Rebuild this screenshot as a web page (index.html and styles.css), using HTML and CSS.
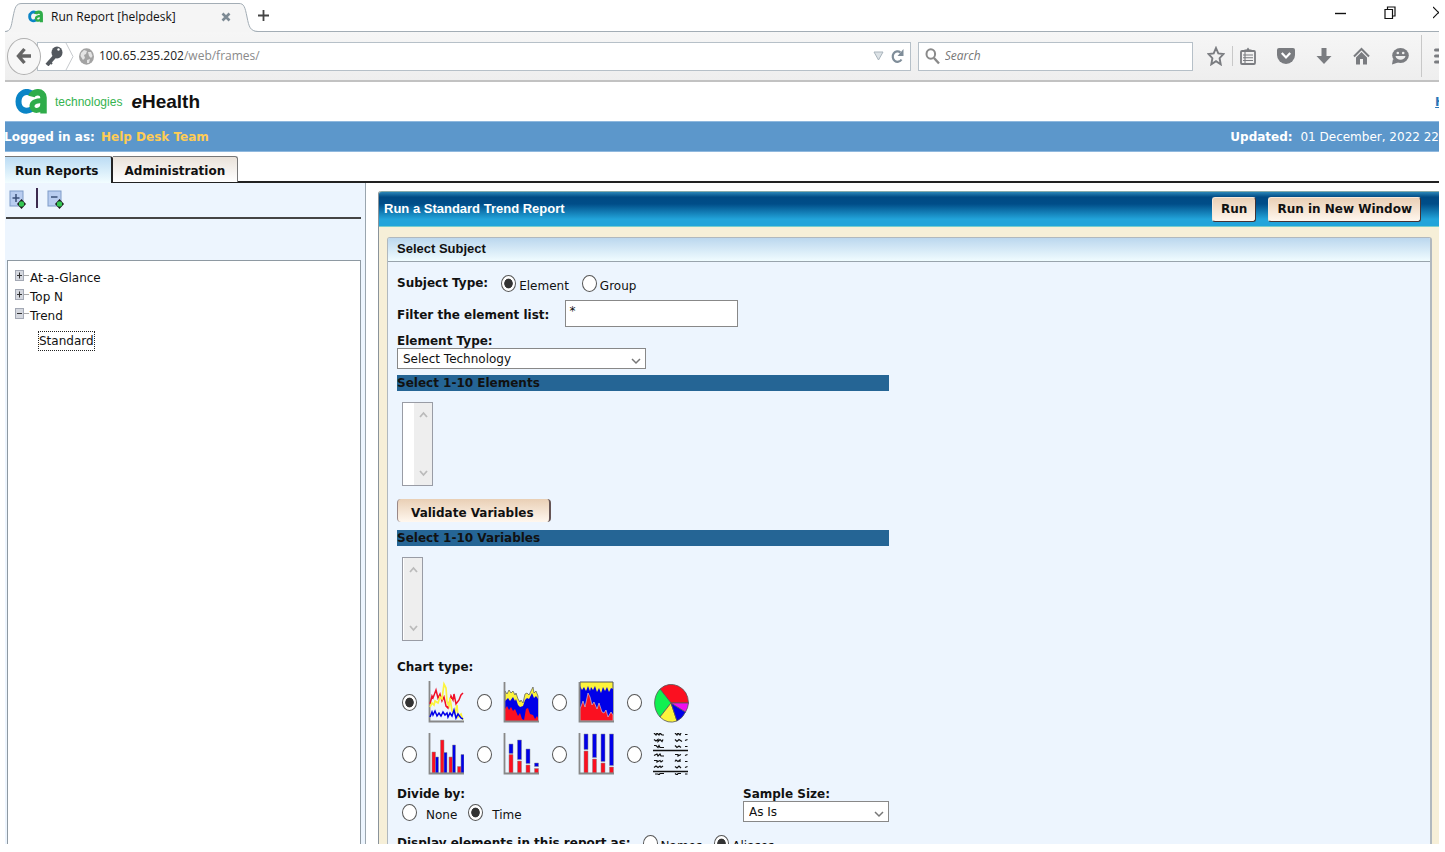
FILE: index.html
```
<!DOCTYPE html>
<html lang="en">
<head>
<meta charset="utf-8">
<title>Run Report [helpdesk]</title>
<link rel="stylesheet" href="styles.css">
</head>
<body>
<svg class="defs" aria-hidden="true">
  <symbol id="ca-mark" viewBox="0 0 34 25">
    <path d="M17 4.500C10 .5 3.500 5 3.500 12.500C3.500 20.500 10 24 17 20" fill="none" stroke="#0a84c6" stroke-width="6"/>
    <path d="M16.500 7.500C18 1.800 28.500 1.500 28.500 8.500V24.500" fill="none" stroke="#2fac4a" stroke-width="6.500"/>
    <path d="M28.500 11.500C20 11.500 17 13.500 17 17C17 23.500 27 22.500 28 16" fill="none" stroke="#2fac4a" stroke-width="5"/>
  </symbol>
</svg>
<div class="frame">
  <div class="tabstrip">
    <div class="browser-tab">
      <svg class="tab-edge" width="17" height="31" viewBox="0 0 17 31"><path d="M0 31C6 30 6 26 8 16C10 6 11 2.500 17 2.500V31Z" fill="#f5f5f5"/><path d="M0 30.500C6 30 6 26 8 16C10 6 11 2.500 17 2.500" fill="none" stroke="#a3adb5"/></svg>
      <div class="tab-body">
        <svg class="favicon" width="16" height="13" preserveAspectRatio="none"><use href="#ca-mark"/></svg>
        <span class="tab-title">Run Report [helpdesk]</span>
        <button class="bare tab-close" aria-label="Close tab"><svg width="10" height="10" viewBox="0 0 10 10"><path d="M1.500 1.500L8.500 8.500M8.500 1.500L1.500 8.500" stroke="#7d8a94" stroke-width="2.600"/></svg></button>
      </div>
      <svg class="tab-edge" width="19" height="31" viewBox="0 0 19 31"><path d="M19 31C11 30 10 26 8 16C6 6 5 2.500 0 2.500V31Z" fill="#f5f5f5"/><path d="M19 30.500C11 30 10 26 8 16C6 6 5 2.500 0 2.500" fill="none" stroke="#a3adb5"/></svg>
    </div>
    <button class="bare new-tab" aria-label="New tab"><svg width="11" height="11" viewBox="0 0 11 11"><path d="M5.500 0V11M0 5.500H11" stroke="#444" stroke-width="1.800"/></svg></button>
    <div class="window-buttons">
      <button class="bare" aria-label="Minimize"><svg width="12" height="13" viewBox="0 0 12 13"><path d="M0 7.500H11" stroke="#111" stroke-width="1.400"/></svg></button>
      <button class="bare" aria-label="Restore"><svg width="12" height="13" viewBox="0 0 12 13"><path d="M1 3.500H8.500V12.500H1ZM3.500 3.500V1H11V10H8.500" fill="none" stroke="#111" stroke-width="1.200"/></svg></button>
      <button class="bare" aria-label="Close window"><svg width="12" height="13" viewBox="0 0 12 13"><path d="M0 1L11 12M11 1L0 12" stroke="#111" stroke-width="1.200"/></svg></button>
    </div>
  </div>

  <div class="navbar">
    <button class="back" aria-label="Back"><svg width="16" height="18" viewBox="0 0 16 18"><path d="M8.500 2L2.500 9L8.500 16M3 9H15" fill="none" stroke="#666" stroke-width="3.400"/></svg></button>
    <div class="urlbar">
      <svg class="key" width="18" height="20" viewBox="0 0 18 20"><path d="M10 10L2 19" stroke="#53585e" stroke-width="4"/><path d="M4 15L7 18" stroke="#53585e" stroke-width="2"/><ellipse cx="12" cy="6.500" rx="5.500" ry="6" fill="#53585e"/><circle cx="13.500" cy="3.500" r="1.200" fill="#fff"/></svg>
      <svg width="9" height="27" viewBox="0 0 9 27"><path d="M1 0L8 13.500L1 27" fill="none" stroke="#c6cacd"/></svg>
      <svg class="globe" width="15" height="17" viewBox="0 0 15 17"><ellipse cx="7.500" cy="8.500" rx="7.500" ry="8.300" fill="#a3a3a3"/><path d="M2 5L5 2L8 3L7 6L5 7L6 10L4 12L1.500 8ZM9 4L12 4L13.500 8L12 10L10 8ZM8 12L11 11L10 15L8 15Z" fill="#e4e4e4"/></svg>
      <input class="url" type="text" aria-label="Address" value="100.65.235.202/web/frames/">
      <div class="url-text" aria-hidden="true"><span class="host">100.65.235.202</span>/web/frames/</div>
      <button class="bare" aria-label="History"><svg width="11" height="10" viewBox="0 0 11 10"><path d="M1 1H10L5.500 9Z" fill="#dce2e6" stroke="#a9b4bc"/></svg></button>
      <button class="bare reload" aria-label="Reload"><svg width="13" height="15" viewBox="0 0 13 15"><path d="M10.500 10.500A4.800 5.200 0 1 1 9.500 3.500" fill="none" stroke="#7f8d99" stroke-width="2.200"/><path d="M12.500 0V7H6.500Z" fill="#7f8d99"/></svg></button>
    </div>
    <div class="searchbar">
      <svg width="15" height="17" viewBox="0 0 15 17"><ellipse cx="5.800" cy="6" rx="4.300" ry="4.800" fill="none" stroke="#8a8a8a" stroke-width="2"/><path d="M9 10L14 15.500" stroke="#8a8a8a" stroke-width="2.400"/></svg>
      <input type="text" aria-label="Search" placeholder="Search">
    </div>
    <div class="nav-icons">
      <button class="bare" aria-label="Bookmark"><svg width="18" height="20" viewBox="0 0 18 20"><path d="M9 2L11.300 7.400L16.500 8L12.600 12.200L13.700 18.300L9 15.200L4.300 18.300L5.400 12.200L1.500 8L6.700 7.400Z" fill="none" stroke="#7a7c80" stroke-width="1.900"/></svg></button>
      <span class="rule"></span>
      <button class="bare" aria-label="Bookmarks list"><svg width="16" height="18" viewBox="0 0 16 18"><rect x="1" y="4" width="14" height="13" rx="1" fill="none" stroke="#7a7c80" stroke-width="1.800"/><path d="M4.500 4.500V2.500H6.500L8 .500L9.500 2.500H11.500V4.500Z" fill="#7a7c80"/><path d="M5 5V16M3 8H13M3 10.700H13M3 13.500H13" stroke="#7a7c80" stroke-width="1.100"/></svg></button>
      <button class="bare" aria-label="Pocket"><svg width="18" height="18" viewBox="0 0 18 18"><path d="M2 1H16Q18 1 18 3V8A9 9 0 0 1 0 8V3Q0 1 2 1Z" fill="#7a7c80"/><path d="M4.800 6L9 10.500L13.200 6" fill="none" stroke="#fff" stroke-width="2.200"/></svg></button>
      <button class="bare" aria-label="Downloads"><svg width="16" height="18" viewBox="0 0 16 18"><path d="M5.500 1H10.500V9H15.500L8 17L.500 9H5.500Z" fill="#7a7c80"/></svg></button>
      <button class="bare" aria-label="Home"><svg width="17" height="18" viewBox="0 0 17 18"><path d="M1 9.500L8.500 2L16 9.500" fill="none" stroke="#7a7c80" stroke-width="2"/><path d="M3 10.500L8.500 5L14 10.500V17.500H10V12H7V17.500H3Z" fill="#7a7c80"/></svg></button>
      <button class="bare" aria-label="Hello"><svg width="18" height="18" viewBox="0 0 18 18"><ellipse cx="9.500" cy="8.500" rx="8.300" ry="7.500" fill="#7a7c80"/><path d="M2 12L1 17.500L7 15.500Z" fill="#7a7c80"/><circle cx="6.800" cy="6" r="1.300" fill="#eee"/><circle cx="12.200" cy="6" r="1.300" fill="#eee"/><path d="M4.500 9H14.500C13.500 14 5.500 14 4.500 9Z" fill="#eee"/></svg></button>
      <span class="rule tall"></span>
      <button class="bare" aria-label="Menu"><svg width="18" height="16" viewBox="0 0 18 16"><path d="M1.500 2H17M1.500 8H17M1.500 14H17" stroke="#7a7c80" stroke-width="3" stroke-linecap="round"/></svg></button>
    </div>
  </div>

  <header class="brand">
    <svg width="34" height="25" role="img" aria-label="ca"><use href="#ca-mark"/></svg>
    <span class="tech">technologies</span>
    <h1 class="product"><em>e</em>Health</h1>
    <a class="help" href="#">Help</a>
  </header>

  <div class="status">
    <div class="logged">Logged in as: <span class="user">Help Desk Team</span></div>
    <div class="updated"><b>Updated:</b> 01 December, 2022 22</div>
  </div>

  <nav class="app-tabs">
    <a class="app-tab current" href="#">Run Reports</a>
    <a class="app-tab" href="#">Administration</a>
  </nav>

  <div class="workspace">
    <aside class="side">
      <div class="tree-tools">
        <button class="bare" aria-label="Expand all"><svg width="18" height="20" viewBox="0 0 18 20"><rect x="1" y="1" width="13" height="15" fill="#b9cdf0" stroke="#7f9bc8"/><path d="M7 4V12M3.500 8H10.500" stroke="#3b4f77" stroke-width="1.500"/><path d="M12.500 9L17 14L12.500 19L8 14Z" fill="#181818"/><circle cx="12.500" cy="14" r="2.700" fill="#35c653"/></svg></button>
        <span class="divider"></span>
        <button class="bare" aria-label="Collapse all"><svg width="18" height="20" viewBox="0 0 18 20"><rect x="1" y="1" width="13" height="15" fill="#b9cdf0" stroke="#7f9bc8"/><path d="M4 7H10.500" stroke="#3b4f77" stroke-width="1.500"/><path d="M12.500 9L17 14L12.500 19L8 14Z" fill="#181818"/><circle cx="12.500" cy="14" r="2.700" fill="#35c653"/></svg></button>
      </div>
      <ul class="tree">
        <li><svg width="14" height="12" viewBox="0 0 14 12"><rect x=".5" y=".5" width="8" height="10" fill="#d5d8df" stroke="#a3a8b4"/><path d="M4.500 2.500V8.500M2 5.500H7" stroke="#333"/><path d="M9 5.500H14" stroke="#aaa"/></svg><a href="#">At-a-Glance</a></li>
        <li><svg width="14" height="12" viewBox="0 0 14 12"><rect x=".5" y=".5" width="8" height="10" fill="#d5d8df" stroke="#a3a8b4"/><path d="M4.500 2.500V8.500M2 5.500H7" stroke="#333"/><path d="M9 5.500H14" stroke="#aaa"/></svg><a href="#">Top N</a></li>
        <li><svg width="14" height="12" viewBox="0 0 14 12"><rect x=".5" y=".5" width="8" height="10" fill="#d5d8df" stroke="#a3a8b4"/><path d="M2 5.500H7" stroke="#333"/><path d="M9 5.500H14" stroke="#aaa"/></svg><a href="#">Trend</a></li>
        <li class="leaf"><a class="focused" href="#">Standard</a></li>
      </ul>
    </aside>

    <main class="report">
      <div class="report-title">
        <h2>Run a Standard Trend Report</h2>
        <button class="action">Run</button>
        <button class="action">Run in New Window</button>
      </div>
      <form class="subject">
        <h3>Select Subject</h3>
        <div class="fields">
          <div class="line type-line">
            <b>Subject Type:</b>
            <label><input type="radio" name="subject" checked><span>Element</span></label>
            <label><input type="radio" name="subject"><span>Group</span></label>
          </div>
          <div class="line filter-line">
            <label class="caption" for="filter">Filter the element list:</label>
            <input id="filter" class="filter" type="text" value="*">
          </div>
          <label class="caption" for="etype">Element Type:</label>
          <select id="etype" class="drop wide"><option>Select Technology</option></select>
          <label class="band" for="elements">Select 1-10 Elements</label>
          <div class="listbox">
            <select id="elements" multiple></select>
            <div class="scroll">
              <svg width="9" height="7" viewBox="0 0 9 7"><path d="M1 6L4.500 2L8 6" fill="none" stroke="#bbb" stroke-width="1.800"/></svg>
              <svg width="9" height="7" viewBox="0 0 9 7"><path d="M1 1L4.500 5L8 1" fill="none" stroke="#bbb" stroke-width="1.800"/></svg>
            </div>
          </div>
          <button type="button" class="action validate">Validate Variables</button>
          <label class="band" for="variables">Select 1-10 Variables</label>
          <div class="listbox slim">
            <select id="variables" multiple></select>
            <div class="scroll">
              <svg width="9" height="7" viewBox="0 0 9 7"><path d="M1 6L4.500 2L8 6" fill="none" stroke="#bbb" stroke-width="1.800"/></svg>
              <svg width="9" height="7" viewBox="0 0 9 7"><path d="M1 1L4.500 5L8 1" fill="none" stroke="#bbb" stroke-width="1.800"/></svg>
            </div>
          </div>
          <b class="caption">Chart type:</b>
          <div class="charts">
            <label><input type="radio" name="chart" aria-label="Line" checked><svg width="36" height="42" viewBox="0 0 36 42"><path d="M1.500 0V40.500H36" fill="none" stroke="#888" stroke-width="1.800"/><path d="M2 23L4 15L5 17L8 9L10 17L12 13L14 20L16 16L18 25L20 27L23 15L25 19L26 13L28 23L31 19L33 14L35 12" fill="none" stroke="#f01028" stroke-width="1.500"/><path d="M2 26L4 22L6 24L7 20L10 22L12 16L14 18L16 3L18 7L19 21L21 25L22 17L24 30L27 32L29 24L30 36L33 33L35 39" fill="none" stroke="#fcf33c" stroke-width="1.700"/><path d="M2 36L4 31L5 34L7 30L9 35L11 32L13 35L15 31L17 34L19 32L20 36L22 32L24 35L26 29L28 37L30 33L33 37L35 38" fill="none" stroke="#0000e8" stroke-width="1.500"/></svg></label>
            <label><input type="radio" name="chart" aria-label="Stacked area"><svg width="36" height="42" viewBox="0 0 36 42"><path d="M2 10L4 13L6 9L8 12L10 10L12 14L13 12L15 18L17 21L18 19L20 22L22 13L24 12L26 14L28 10L30 6L31 12L33 10L35 15V40H2Z" fill="#fcf33c" stroke="#555" stroke-width=".7"/><path d="M2 20L5 17L7 20L10 16L12 20L13 18L15 24L17 26L20 25L22 19L24 17L26 18L29 12L31 17L33 15L35 18V40H2Z" fill="#0000e8"/><path d="M2 28L4 25L6 29L8 26L10 30L12 28L15 35L17 32L19 38L21 39L23 28L25 27L27 33L30 34L32 38L34 35L35 37V40H2Z" fill="#fb1020"/><path d="M1.500 1V40.500H36" fill="none" stroke="#888" stroke-width="1.800"/></svg></label>
            <label><input type="radio" name="chart" aria-label="Percent area"><svg width="36" height="42" viewBox="0 0 36 42"><path d="M2 1H35V40H2Z" fill="#fcf33c" stroke="#555"/><path d="M2 5L4 9L6 6L8 10L10 5L12 10L13 6L15 9L17 5L19 11L21 7L23 12L25 6L27 10L29 6L31 11L33 7L35 8V40H2Z" fill="#0000e8"/><path d="M2 28L5 20L7 26L10 12L12 16L14 24L16 21L19 28L21 22L24 31L26 32L28 29L30 36L33 31L35 34V40H2Z" fill="#fb1020" stroke="#ddd" stroke-width=".6"/><path d="M1.500 1V40.500H36" fill="none" stroke="#888" stroke-width="1.800"/></svg></label>
            <label><input type="radio" name="chart" aria-label="Pie"><svg width="36" height="42" viewBox="0 0 36 42"><g stroke="#555" stroke-width=".8"><path d="M18 22L7 8A17.300 19.300 0 0 1 35.500 22Z" fill="#fb1020"/><path d="M18 22L7 36A17.300 19.300 0 0 1 7 8Z" fill="#10f050"/><path d="M18 22L24 40A17.300 19.300 0 0 1 7 36Z" fill="#fcf33c"/><path d="M18 22L32.500 31A17.300 19.300 0 0 1 24 40Z" fill="#0000e8"/><path d="M18 22H35.500A17.300 19.300 0 0 1 32.500 31Z" fill="#f010f0"/></g></svg></label>
            <label><input type="radio" name="chart" aria-label="Grouped bar"><svg width="36" height="42" viewBox="0 0 36 42"><g stroke="#888" stroke-width=".5"><path d="M4 19H7.500V40H4ZM12.500 7H16V40H12.500ZM21 24H24.500V40H21ZM29.500 33.500H33V40H29.500Z" fill="#fb1020"/><path d="M7.500 24H10.500V40H7.500ZM16 19.500H19V40H16ZM24.500 12H27.500V40H24.500ZM33 21.500H36V40H33Z" fill="#0000e8"/></g><path d="M1.500 0V40.500H36" fill="none" stroke="#888" stroke-width="1.800"/></svg></label>
            <label><input type="radio" name="chart" aria-label="Stacked bar"><svg width="36" height="42" viewBox="0 0 36 42"><g stroke="#888" stroke-width=".5"><path d="M6 11H10V20.500H6ZM14.500 7H18.500V26.500H14.500ZM23 16H27V30.500H23ZM31.500 30H35.500V33.500H31.500Z" fill="#0000e8"/><path d="M6 21.500H10V40H6ZM14.500 28H18.500V40H14.500ZM23 32H27V40H23ZM31.500 35.500H35.500V40H31.500Z" fill="#fb1020"/></g><path d="M1.500 0V40.500H36" fill="none" stroke="#888" stroke-width="1.800"/></svg></label>
            <label><input type="radio" name="chart" aria-label="Percent bar"><svg width="36" height="42" viewBox="0 0 36 42"><g stroke="#888" stroke-width=".5"><path d="M6 1H10V16.500H6ZM14.500 1H18.500V24.500H14.500ZM23 1H27V28.500H23ZM31.500 1H35.500V32.500H31.500Z" fill="#0000e8"/><path d="M6 18H10V40H6ZM14.500 26H18.500V40H14.500ZM23 30H27V40H23ZM31.500 34H35.500V40H31.500Z" fill="#fb1020"/></g><path d="M1.500 0V40.500H36" fill="none" stroke="#888" stroke-width="1.800"/></svg></label>
            <label><input type="radio" name="chart" aria-label="Table"><svg width="36" height="42" viewBox="0 0 36 42"><path d="M0 17.500H35M0 38.500H35" stroke="#111" stroke-width="1.300"/><path d="M1 0L3 2L4 0L6 2L7 0L9 2H11M1 6.500L3 8L5 6.500V8.500L7 6.500L9 8.500L10 6.500M1 12.500H3L5 14.500L6 12.500L7 14.500H11M1 22.500L4 21L5 23L7 21L8 23H11M1 27.500H4V29L7 27.500L8 29L10 27.500M1 34.500L3 33L5 34.500L7 33L8 34.500L10 33M2 41H5L6 42L7 40.500H11M22 0L24 2L25 0L27 2L28 0M22 6.500L24 8.500L26 6.500L29 8.500M22 12.500L24 14.500L26 13L28 14.500M22 21.500H25V23L28 21.500M22 28.500L23 27L25 28.500L27 27V29M22 33.500L24 35L26 33L28 35M22 40.500L24 42L25 40.500H28M32 1.500H34.500M32 7.500L34.500 6.500M32 13.500H34.500M32 22.500L34.500 21.500M32 28.500H34.500M32 34.500L34.500 33.500M32 41H34.500" fill="none" stroke="#111" stroke-width="1.200"/></svg></label>
          </div>
          <div class="split">
            <div>
              <b class="caption">Divide by:</b>
              <div class="line divide-line">
                <label><input type="radio" name="divide"><span>None</span></label>
                <label><input type="radio" name="divide" checked><span>Time</span></label>
              </div>
            </div>
            <div class="sample">
              <label class="caption" for="sample">Sample Size:</label>
              <select id="sample" class="drop"><option>As Is</option></select>
            </div>
          </div>
          <div class="line display-line">
            <b>Display elements in this report as:</b>
            <label><input type="radio" name="display"><span>Names</span></label>
            <label><input type="radio" name="display" checked><span>Aliases</span></label>
          </div>
        </div>
      </form>
    </main>
  </div>
</div>
</body>
</html>
```
FILE: styles.css
```
* { box-sizing: border-box; }
body {
  margin: 0;
  padding: 0 6px 8px 5px;
  height: 100vh;
  overflow: hidden;
  background: #fff;
  color: #111;
  font: 12px/16px "DejaVu Sans", Verdana, sans-serif;
}
svg { display: block; flex: none; }
.defs { position: absolute; width: 0; height: 0; }
button, input, select { font: inherit; color: inherit; margin: 0; }
.bare { border: 0; padding: 0; background: none; }
a { color: inherit; text-decoration: none; }
h1, h2, h3 { margin: 0; }
.frame { height: 100%; display: flex; flex-direction: column; overflow: hidden; }
.frame > * { flex: none; }

/* browser chrome */
.tabstrip {
  height: 32px;
  display: flex;
  align-items: flex-end;
  border-bottom: 1px solid #a3adb5;
  font: 12px/16px "Open Sans", sans-serif;
}
.browser-tab { display: flex; margin-bottom: -1px; height: 31px; }
.tab-body {
  width: 217px;
  display: flex;
  align-items: center;
  gap: 7px;
  padding: 0 8px 3px 6px;
  border-top: 1px solid #a3adb5;
  margin-top: 2px;
  background: #f5f5f5;
}
.tab-close { margin-left: auto; }
.new-tab { padding: 0 0 10px 0; }
.window-buttons {
  margin: 0 -6px 12px auto;
  display: flex;
  gap: 37px;
}
.navbar {
  height: 50px;
  display: flex;
  align-items: center;
  border-bottom: 2px solid #c2c2c2;
  padding-left: 2px;
  background: linear-gradient(#f6f6f6, #eee);
  font: 12px/16px "Open Sans", sans-serif;
  color: #8a8a8a;
}
.back {
  width: 34px;
  height: 37px;
  z-index: 1;
  display: flex;
  align-items: center;
  justify-content: center;
  padding: 0;
  border: 1px solid #b0b0b0;
  border-radius: 50%;
  background: #f7f7f7;
}
.urlbar {
  position: relative;
  flex: 874 1 0;
  height: 29px;
  margin-left: -4px;
  padding: 0 6px 0 7px;
  display: flex;
  align-items: center;
  border: 1px solid #b6c0c8;
  background: #fff;
}
.key { margin-right: 2px; }
.globe { margin: 0 6px 0 5px; }
.url { flex: 1; min-width: 0; border: 0; padding: 0; outline: 0; background: none; color: transparent; }
.url-text { position: absolute; left: 61px; pointer-events: none; }
.host { color: #222; }
.reload { margin-left: 7px; }
.searchbar {
  flex: 272 1 0;
  height: 29px;
  margin-left: 7px;
  padding-left: 6px;
  display: flex;
  align-items: center;
  gap: 5px;
  border: 1px solid #b6c0c8;
  background: #fff;
}
.searchbar input { flex: 1; min-width: 0; border: 0; padding: 0; background: none; }
.searchbar input::placeholder { color: #777; font-style: italic; opacity: 1; }
.nav-icons { display: flex; align-items: center; gap: 21px; margin: 0 -13px 0 14px; }
.rule { width: 1px; height: 20px; margin: 0 -14px; background: #c8c8c8; }
.rule.tall { height: 42px; margin: 0 -9px; }

/* application header */
.brand { height: 39px; display: flex; align-items: center; padding-left: 10px; }
.tech { margin-left: 6px; font: 12px/16px "Liberation Sans", Arial, sans-serif; color: #35b34f; }
.product { margin-left: 9px; font: bold 19px/24px "Liberation Sans", Arial, sans-serif; }
.help { margin: 0 -27px 0 auto; color: #2a76b8; font-weight: bold; text-decoration: underline; }
.status {
  height: 31px;
  display: flex;
  align-items: center;
  justify-content: space-between;
  border: solid #8fb8de;
  border-width: 1px 0;
  background: #5c97cb;
  color: #fff;
  white-space: nowrap;
}
.logged { margin-left: -1px; font-weight: bold; }
.user { margin-left: 2px; color: #fc5; }
.updated b { margin-right: 4px; }
.app-tabs { height: 31px; padding-top: 4px; display: flex; border-bottom: 2px solid #222; }
.app-tab {
  height: 26px;
  padding: 0 12px;
  border: 1px solid #777;
  border-bottom: 0;
  border-left: 0;
  border-radius: 0 3px 0 0;
  background: linear-gradient(#e9e2da, #fff);
  font-weight: bold;
  line-height: 28px;
}
.app-tab.current { height: 27px; padding: 0 12px 0 10px; border-right: 2px solid #222; background: linear-gradient(#bcdcf4, #f2fdff); }

/* workspace */
.frame > .workspace { flex: 1; min-height: 0; display: flex; overflow: hidden; }
.side {
  width: 361px;
  flex: none;
  display: flex;
  flex-direction: column;
  padding: 0 4px 0 1px;
  border-right: 1px solid #9aa5ae;
  background: #edf5fe;
}
.tree-tools { height: 36px; padding: 5px 3px; display: flex; gap: 9px; border-bottom: 2px solid #444; }
.divider { width: 2px; height: 20px; background: #3d2b4f; }
.tree {
  flex: 1;
  margin: 41px 0 0 1px;
  padding: 7px;
  list-style: none;
  border: 1px solid #8e99a2;
  border-bottom: 0;
  background: #fff;
}
.tree li { height: 19px; display: flex; align-items: center; line-height: 18px; }
.tree li svg { margin: 0 1px 4px 0; }
.tree .leaf { height: 18px; margin: 7px 0 0 24px; }
.focused { outline: 1px dotted #222; }

.report {
  flex: 1;
  min-width: 0;
  margin: 8px 0 0 12px;
  display: flex;
  flex-direction: column;
  border-left: 1px solid #8a939a;
  border-top-left-radius: 3px;
  background: #f6efd8;
}
.report-title {
  flex: none;
  height: 36px;
  display: flex;
  align-items: center;
  gap: 12px;
  padding: 0 18px 0 5px;
  border-top: 1px solid #8aa;
  border-bottom: 1px solid #7cc;
  border-top-left-radius: 3px;
  background: linear-gradient(#2a86b8, #004a84 15%, #004d88 35%, #22a4da 80%, #22a4da);
}
.report-title h2, .subject h3 { font: bold 13px/22px "Liberation Sans", Arial, sans-serif; }
.report-title h2 { flex: 1; color: #fff; }
.action {
  height: 25px;
  padding: 0 8px;
  border: 1px solid #fff;
  border-color: #f8e8d8 #433 #433 #f8e8d8;
  border-radius: 3px;
  background: linear-gradient(#e9cfb5, #fff7ee);
  font-weight: bold;
}
.subject {
  flex: 1;
  min-height: 0;
  margin: 10px 7px 0 8px;
  overflow: hidden;
  border: solid #b0b8be;
  border-width: 1px 2px 0 1px;
  border-radius: 3px 3px 0 0;
  background: #edf5fe;
}
.subject h3 { height: 24px; padding-left: 9px; border-bottom: 1px solid #99a4ac; background: linear-gradient(#bbd7ee, #f0fcff); }
.fields { padding: 11px 9px; display: flex; flex-direction: column; align-items: flex-start; }
.fields > * { flex: none; }
.line { display: flex; align-items: center; }
.line label:not(.caption) { display: flex; align-items: center; gap: 3px; }
.line label > span { padding-top: 5px; }
.caption { display: block; font-weight: bold; line-height: 14px; }
input[type="radio"] {
  appearance: none;
  flex: none;
  width: 15px;
  height: 17px;
  border: 1px solid #555;
  border-radius: 50%;
  background: #fff;
}
input[type="radio"]:checked { background: radial-gradient(closest-side, #333 60%, #fff 70%); }
.type-line { height: 20px; gap: 13px; }
.filter-line { height: 26px; margin: 7px 0 8px; gap: 16px; }
.filter-line .caption { padding-top: 4px; }
.filter { width: 173px; height: 27px; padding: 0 3px 5px; border: 1px solid #888; background: #fff; }
.drop {
  appearance: none;
  width: 146px;
  height: 21px;
  padding: 0 5px;
  border: 1px solid #888;
  border-radius: 0;
  background: #fff url("data:image/svg+xml,%3Csvg xmlns='http://www.w3.org/2000/svg' width='10' height='7'%3E%3Cpath d='M1 1L5 5L9 1' fill='none' stroke='%23777' stroke-width='1.500'/%3E%3C/svg%3E") no-repeat right 4px bottom 3px;
}
.drop.wide { width: 249px; }
.band { width: 492px; max-width: 100%; height: 16px; margin-top: 6px; background: #256595; font-weight: bold; }
.listbox { width: 31px; height: 84px; display: flex; margin: 11px 0 13px 5px; border: 1px solid #999ca5; background: #fff; }
.listbox.slim { width: 21px; margin-bottom: 19px; }
.listbox select { flex: 1; min-width: 0; width: 0; padding: 0; border: 0; outline: 0; background: #fff; overflow: hidden; }
.scroll { width: 18px; padding: 8px 0; display: flex; flex-direction: column; align-items: center; justify-content: space-between; background: #eee; }
.validate { height: 23px; padding: 4px 15px 0 13px; border-width: 0 2px 0 1px; border-color: #544 #655 #544 #988; border-radius: 4px; }
.validate + .band { margin-top: 8px; }
.charts { margin: 7px 0 12px 5px; display: grid; grid-template-columns: repeat(4, 75px); row-gap: 10px; }
.charts label { display: flex; align-items: center; gap: 11px; }
.split { display: flex; }
.split > div:first-child { width: 346px; }
.sample .drop { display: block; }
.divide-line { height: 22px; padding-left: 5px; gap: 11px; }
.divide-line label:not(.caption) { gap: 9px; }
.display-line { height: 20px; margin-top: 10px; gap: 12px; }
```
